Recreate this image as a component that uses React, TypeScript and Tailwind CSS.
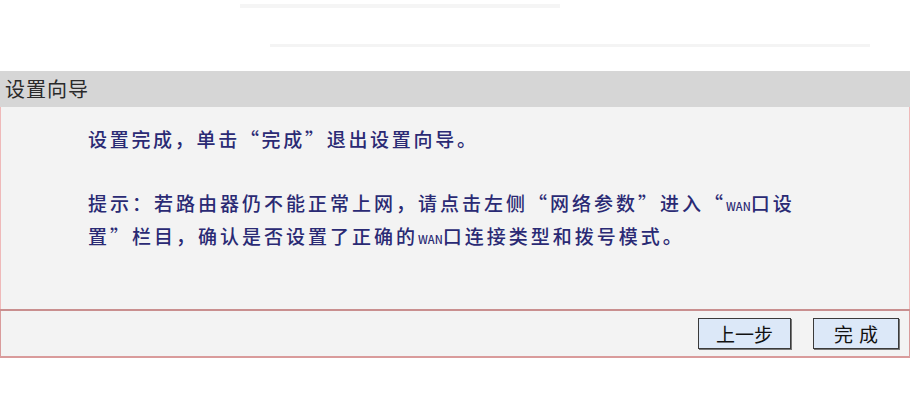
export default function App() {
  const cjk = { fontFamily: '"Noto Sans CJK SC", "Noto Sans", sans-serif' };
  return (
    <div className="w-[911px] h-[407px] bg-white overflow-hidden" style={cjk}>
      {/* faint ghost rows above the panel */}
      <div className="h-[71px] flex flex-col">
        <div className="h-[4px] mt-[4px] ml-[240px] w-[320px] bg-[#f5f5f5]" />
        <div className="h-[3px] mt-[36px] ml-[270px] w-[600px] bg-[#f4f4f4]" />
      </div>

      <div className="w-[910px]">
        <div className="h-[36px] bg-[#d6d6d6] flex items-center pl-[5px] text-[20px] text-[#2a2a2a] tracking-[1px]">
          设置向导
        </div>

        <div className="h-[202px] bg-[#f3f3f3] border-x border-[#efb9b9] pl-[87px] pt-[17px] text-[19px] leading-[30px] text-[#2a2a74] font-medium">
          <p className="tracking-[2.7px]">设置完成，单击“完成”退出设置向导。</p>
          <p className="mt-[34px] tracking-[3px]">
            提示：若路由器仍不能正常上网，请点击左侧“网络参数”进入“<span className="text-[11px] tracking-normal">WAN</span>口设
          </p>
          <p className="tracking-[3px]">
            置”栏目，确认是否设置了正确的<span className="text-[11px] tracking-normal">WAN</span>口连接类型和拨号模式。
          </p>
        </div>

        <div className="h-[2px] bg-[#c98f8f]" />

        <div className="h-[47px] bg-[#f3f3f3] border-x border-b-2 border-[#d99b9b] flex items-center justify-end gap-[22px] pr-[10px]">
          <button className="w-[93px] h-[31px] bg-[#dce8f8] border border-[#3a3a3a] shadow-[1px_1px_0_#777] text-[19px] text-[#111] leading-none">
            上一步
          </button>
          <button className="w-[86px] h-[31px] bg-[#dce8f8] border border-[#3a3a3a] shadow-[1px_1px_0_#777] text-[19px] text-[#111] leading-none tracking-[6px] pl-[6px]">
            完成
          </button>
        </div>
      </div>
    </div>
  );
}
